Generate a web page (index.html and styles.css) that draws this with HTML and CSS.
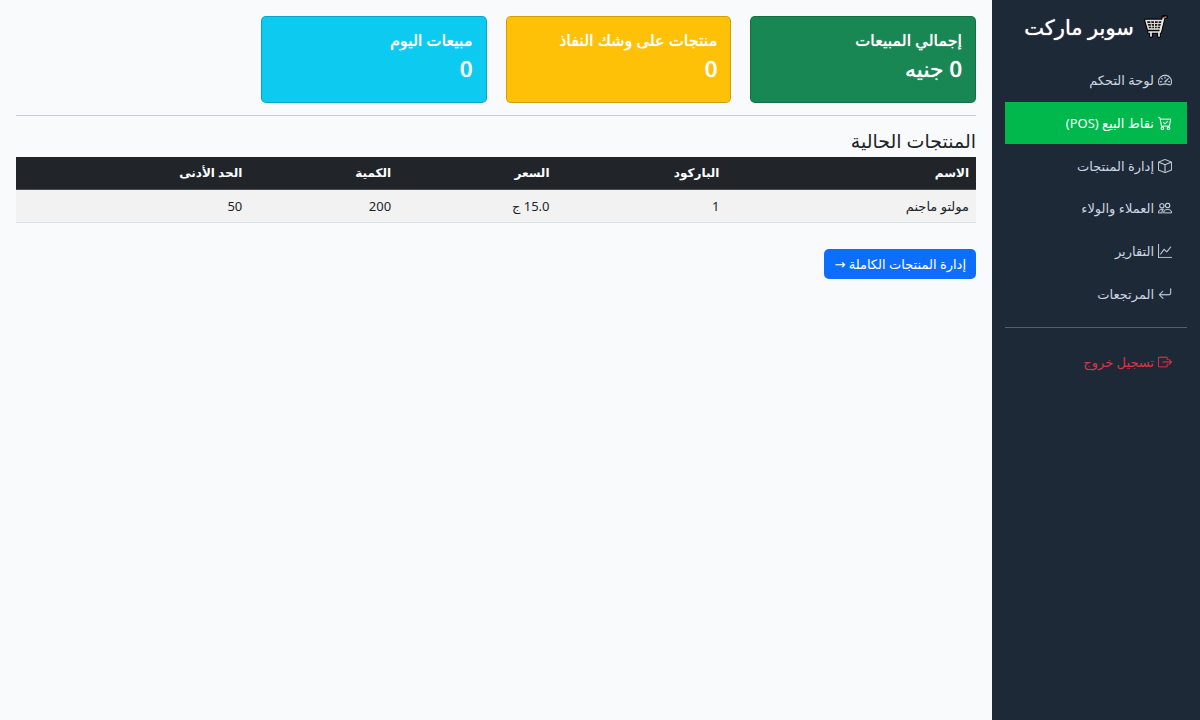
FILE: index.html
```html
<!DOCTYPE html>
<html lang="ar" dir="rtl">
<head>
<meta charset="utf-8">
<meta name="viewport" content="width=device-width, initial-scale=1">
<title>سوبر ماركت</title>
<link rel="stylesheet" href="styles.css">
</head>
<body>
<div class="layout">
  <aside class="sidebar">
    <div class="brand">
      <svg class="brand-icon" viewBox="0 0 24 24" aria-hidden="true" fill="none" stroke-linecap="round" stroke-linejoin="round">
        <g stroke="#050505" stroke-width="4"><path d="M22 2h-2.500l-3.500 15H5M2 5.500h16.500L16.500 14H4.500z"/><path d="M7 17v4M15 17v4"/></g>
        <path d="M2 5.500h16.500L16.500 14H4.500z" fill="#171717" stroke="#e4e0db" stroke-width="1.500"/>
        <path d="M3 8.500h15M4 11.300h13M6.500 5.500L8 14M10.500 5.500V14M14.500 5.500L13 14" stroke="#d9d5d0" stroke-width="1"/>
        <path d="M19.500 3l-3.400 14H5M7 17.500v3.500M15 17.500v3.500" stroke="#eeeae5" stroke-width="1.700"/>
        <path d="M22 2l-2.300.8" stroke="#a8665e" stroke-width="1.500"/>
      </svg>
      <span>سوبر ماركت</span>
    </div>
    <nav class="menu">
      <a class="menu-link" href="#dashboard"><svg class="icon" viewBox="0 0 16 16" aria-hidden="true"><path d="M8 4a.5.5 0 0 1 .5.5V6a.5.5 0 0 1-1 0V4.500A.5.5 0 0 1 8 4M3.732 5.732a.5.5 0 0 1 .707 0l.915.914a.5.5 0 1 1-.708.708l-.914-.915a.5.5 0 0 1 0-.707M2 10a.5.5 0 0 1 .5-.5h1.586a.5.5 0 0 1 0 1H2.500A.5.5 0 0 1 2 10m9.500 0a.5.5 0 0 1 .5-.5h1.500a.5.5 0 0 1 0 1H12a.5.5 0 0 1-.5-.5m.754-4.246a.39.39 0 0 0-.527-.02L7.547 9.310a.91.91 0 1 0 1.302 1.258l3.434-4.297a.39.39 0 0 0-.029-.518z"/><path fill-rule="evenodd" d="M0 10a8 8 0 1 1 15.547 2.661c-.442 1.253-1.845 1.602-2.932 1.250C11.309 13.488 9.475 13 8 13c-1.474 0-3.310.488-4.615.911-1.087.352-2.490.003-2.932-1.250A8 8 0 0 1 0 10m8-7a7 7 0 0 0-6.603 9.329c.203.575.923.876 1.680.63C4.397 12.533 6.358 12 8 12s3.604.532 4.923.96c.757.245 1.477-.056 1.680-.631A7 7 0 0 0 8 3"/></svg><span>لوحة التحكم</span></a>
      <a class="menu-link active" href="#pos" aria-current="page"><svg class="icon" viewBox="0 0 16 16" aria-hidden="true"><path d="M11.354 6.354a.5.5 0 0 0-.708-.708L8 8.293 6.854 7.146a.5.5 0 1 0-.708.708l1.500 1.500a.5.5 0 0 0 .708 0z"/><path d="M.5 1a.5.5 0 0 0 0 1h1.110l.401 1.607 1.498 7.985A.5.5 0 0 0 4 12h1a2 2 0 1 0 0 4 2 2 0 0 0 0-4h7a2 2 0 1 0 0 4 2 2 0 0 0 0-4h1a.5.5 0 0 0 .491-.408l1.500-8A.5.5 0 0 0 14.500 3H2.890l-.405-1.621A.5.5 0 0 0 2 1zm3.915 10L3.102 4h10.796l-1.313 7zM6 14a1 1 0 1 1-2 0 1 1 0 0 1 2 0m7 0a1 1 0 1 1-2 0 1 1 0 0 1 2 0"/></svg><span>نقاط البيع (POS)</span></a>
      <a class="menu-link" href="#products"><svg class="icon" viewBox="0 0 16 16" aria-hidden="true"><path d="M8.186 1.113a.5.5 0 0 0-.372 0L1.846 3.500 8 5.961 14.154 3.500zM15 4.239l-6.500 2.600v7.922l6.500-2.600V4.240zM7.500 14.762V6.838L1 4.239v7.923zM7.443.184a1.500 1.500 0 0 1 1.114 0l7.129 2.852A.5.5 0 0 1 16 3.500v8.662a1 1 0 0 1-.629.928l-7.185 2.874a.5.5 0 0 1-.372 0L.63 13.090a1 1 0 0 1-.63-.928V3.500a.5.5 0 0 1 .314-.464z"/></svg><span>إدارة المنتجات</span></a>
      <a class="menu-link" href="#customers"><svg class="icon" viewBox="0 0 16 16" aria-hidden="true"><path d="M15 14s1 0 1-1-1-4-5-4-5 3-5 4 1 1 1 1zm-7.978-1L7 12.996c.001-.264.167-1.030.76-1.720C8.312 10.629 9.282 10 11 10c1.717 0 2.687.63 3.240 1.276.593.69.758 1.457.76 1.720l-.008.002-.014.002zM11 7a2 2 0 1 0 0-4 2 2 0 0 0 0 4m3-2a3 3 0 1 1-6 0 3 3 0 0 1 6 0M6.936 9.280a6 6 0 0 0-1.230-.247A7 7 0 0 0 5 9c-4 0-5 3-5 4q0 1 1 1h4.216A2.240 2.240 0 0 1 5 13c0-1.010.377-2.042 1.090-2.904.243-.294.526-.569.846-.816M4.920 10A5.500 5.500 0 0 0 4 13H1c0-.26.164-1.030.76-1.724.545-.636 1.492-1.256 3.160-1.275ZM1.500 5.500a3 3 0 1 1 6 0 3 3 0 0 1-6 0m3-2a2 2 0 1 0 0 4 2 2 0 0 0 0-4"/></svg><span>العملاء والولاء</span></a>
      <a class="menu-link" href="#reports"><svg class="icon" viewBox="0 0 16 16" aria-hidden="true"><path fill-rule="evenodd" d="M0 0h1v15h15v1H0zm14.817 3.113a.5.5 0 0 1 .07.704l-4.500 5.500a.5.5 0 0 1-.74.037L7.060 6.767l-3.656 5.027a.5.5 0 0 1-.808-.588l4-5.500a.5.5 0 0 1 .758-.06l2.609 2.610 4.150-5.073a.5.5 0 0 1 .704-.07"/></svg><span>التقارير</span></a>
      <a class="menu-link" href="#returns"><svg class="icon" viewBox="0 0 16 16" aria-hidden="true"><path fill-rule="evenodd" d="M14.500 1.500a.5.5 0 0 1 .5.5v4.800a2.500 2.500 0 0 1-2.500 2.500H2.707l3.347 3.346a.5.5 0 0 1-.708.708l-4.200-4.200a.5.5 0 0 1 0-.708l4-4a.5.5 0 1 1 .708.708L2.707 8.300H12.500A1.500 1.500 0 0 0 14 6.800V2a.5.5 0 0 1 .5-.5"/></svg><span>المرتجعات</span></a>
    </nav>
    <hr class="menu-rule">
    <a class="menu-link logout" href="#logout"><svg class="icon" viewBox="0 0 16 16" aria-hidden="true"><path fill-rule="evenodd" d="M10 12.500a.5.5 0 0 1-.5.5h-8a.5.5 0 0 1-.5-.5v-9a.5.5 0 0 1 .5-.5h8a.5.5 0 0 1 .5.5v2a.5.5 0 0 0 1 0v-2A1.500 1.500 0 0 0 9.500 2h-8A1.500 1.500 0 0 0 0 3.500v9A1.500 1.500 0 0 0 1.500 14h8a1.500 1.500 0 0 0 1.500-1.500v-2a.5.5 0 0 0-1 0z"/><path fill-rule="evenodd" d="M15.854 8.354a.5.5 0 0 0 0-.708l-3-3a.5.5 0 0 0-.708.708L14.293 7.500H5.500a.5.5 0 0 0 0 1h8.793l-2.147 2.146a.5.5 0 0 0 .708.708z"/></svg><span>تسجيل خروج</span></a>
  </aside>
  <main class="content">
    <section class="cards">
      <article class="card sales"><h2 class="card-title">إجمالي المبيعات</h2><p class="card-value">0 جنيه</p></article>
      <article class="card stock"><h2 class="card-title">منتجات على وشك النفاذ</h2><p class="card-value">0</p></article>
      <article class="card today"><h2 class="card-title">مبيعات اليوم</h2><p class="card-value">0</p></article>
    </section>
    <hr class="content-rule">
    <h1 class="heading">المنتجات الحالية</h1>
    <table class="products">
      <colgroup><col class="col-name"><col class="col-code"><col class="col-price"><col class="col-qty"><col></colgroup>
      <thead><tr><th scope="col">الاسم</th><th scope="col">الباركود</th><th scope="col">السعر</th><th scope="col">الكمية</th><th scope="col">الحد الأدنى</th></tr></thead>
      <tbody><tr><td>مولتو ماجنم</td><td>1</td><td>15.0 ج</td><td>200</td><td>50</td></tr></tbody>
    </table>
    <a class="button" href="#products">إدارة المنتجات الكاملة →</a>
  </main>
</div>
</body>
</html>
```

FILE: styles.css
```css
* { box-sizing: border-box; }
body {
  margin: 0;
  background: #f8fafc;
  color: #212529;
  font-family: "Segoe UI", "Noto Sans", "Open Sans", "DejaVu Sans", sans-serif;
  font-size: 13px;
  line-height: 20px;
}
.layout { display: flex; min-height: 100vh; }
.sidebar {
  flex: 0 0 208px;
  padding: 13px;
  background: #1e2937;
}
.brand {
  display: flex;
  align-items: center;
  justify-content: center;
  gap: 10px;
  height: 28px;
  margin-bottom: 18px;
  color: #fff;
  font-size: 21px;
  font-weight: 500;
  line-height: 28px;
  text-shadow: 0 0 1px currentColor;
  white-space: nowrap;
}
.brand-icon { width: 24px; height: 24px; flex: none; }
.menu { display: flex; flex-direction: column; height: 256px; }
.menu-link {
  display: flex;
  flex: 1;
  align-items: center;
  gap: 4px;
  padding: 0 15px;
  color: #cbd5e1;
  font-size: 13px;
  line-height: 20px;
  text-decoration: none;
  white-space: nowrap;
}
.menu-link.active { background: #00b84c; color: #fff; }
.icon { width: 14px; height: 14px; flex: none; fill: currentColor; stroke: currentColor; stroke-width: 0.2; }
.menu-rule { margin: 12px 0; border: 0; border-top: 1px solid #56606b; }
.menu-link.logout { height: 44px; color: #dc3545; }
.content { flex: 1; min-width: 0; padding: 16px; }
.cards { display: grid; grid-template-columns: repeat(4, 1fr); gap: 19px; }
.card {
  min-height: 87px;
  padding: 13px;
  border: 1px solid rgba(0, 0, 0, 0.18);
  border-radius: 5px;
  color: #fff;
  text-shadow: 0 0 1px currentColor;
}
.sales { background: #198754; }
.stock { background: #ffc107; }
.today { background: #0dcaf0; }
.card-title { margin: 0 0 4px; font-size: 16px; font-weight: 500; line-height: 20px; white-space: nowrap; }
.card-value { margin: 0; font-size: 22px; font-weight: 500; line-height: 28px; }
.content-rule { margin: 12px 0 13px; border: 0; border-top: 1px solid #c9cccf; }
.heading { margin: 0 0 4px; font-size: 19px; font-weight: 500; line-height: 24px; }
.products { width: 100%; margin-bottom: 26px; border-collapse: collapse; table-layout: fixed; }
.col-name { width: 26%; }
.col-code { width: 17.7%; }
.col-price { width: 16.5%; }
.col-qty { width: 15.5%; }
.products th, .products td { padding: 6px 7px; border-bottom: 1px solid #dee2e6; text-align: start; }
.products th { background: #212529; border-color: #4d5154; color: #fff; font-size: 12px; font-weight: 600; }
.products td { background: #f2f2f2; }
.button {
  display: inline-block;
  padding: 5px 10px;
  border-radius: 5px;
  background: #0d6efd;
  color: #fff;
  text-decoration: none;
}
```
